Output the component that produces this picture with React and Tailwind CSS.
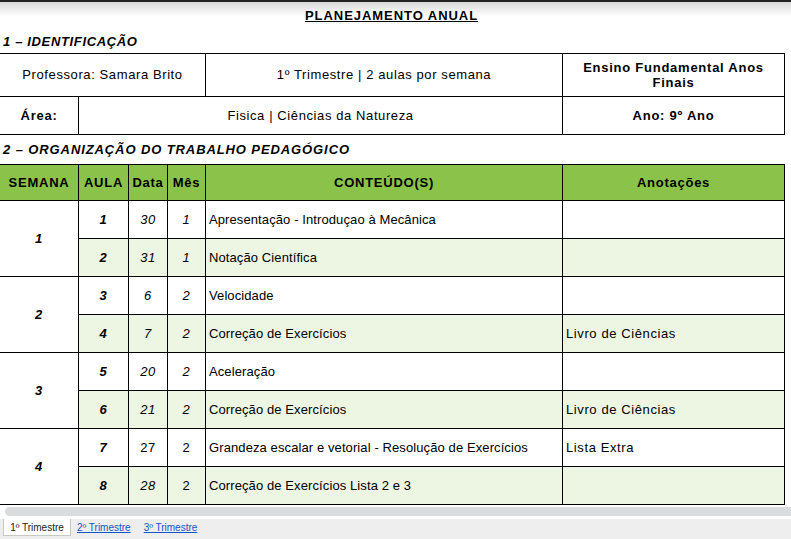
import React from "react";

const aulas = [
  { semana: 1, aula: 1, data: "30", dataIt: true, mes: "1", mesIt: true, conteudo: "Apresentação - Introduçao à Mecânica", nota: "" },
  { aula: 2, data: "31", dataIt: true, mes: "1", mesIt: true, conteudo: "Notação Científica", nota: "" },
  { semana: 2, aula: 3, data: "6", dataIt: true, mes: "2", mesIt: true, conteudo: "Velocidade", nota: "" },
  { aula: 4, data: "7", dataIt: true, mes: "2", mesIt: true, conteudo: "Correção de Exercícios", nota: "Livro de Ciências" },
  { semana: 3, aula: 5, data: "20", dataIt: true, mes: "2", mesIt: true, conteudo: "Aceleração", nota: "" },
  { aula: 6, data: "21", dataIt: true, mes: "2", mesIt: true, conteudo: "Correção de Exercícios", nota: "Livro de Ciências" },
  { semana: 4, aula: 7, data: "27", dataIt: false, mes: "2", mesIt: false, conteudo: "Grandeza escalar e vetorial - Resolução de Exercícios", nota: "Lista Extra" },
  { aula: 8, data: "28", dataIt: true, mes: "2", mesIt: false, conteudo: "Correção de Exercícios Lista 2 e 3", nota: "" },
];

const cell = "border-r border-b border-black flex items-center";

const App = () => {
  return (
    <div
      className="relative w-[791px] h-[539px] overflow-hidden bg-white text-[13px] tracking-[0.6px] text-black"
      style={{ fontFamily: '"Liberation Sans", Arial, sans-serif' }}
    >
      <div className="h-[2px] bg-[#232323]" />
      <div className="pointer-events-none absolute left-0 right-0 top-[2px] h-[14px] bg-linear-to-b from-[#d8d8d8] to-white/0" />

      <div className="h-[28px] flex items-center justify-center pr-[8px]">
        <span className="relative font-bold underline tracking-[0.95px]">PLANEJAMENTO ANUAL</span>
      </div>
      <div className="h-[23px] flex items-center pl-[3px] font-bold italic tracking-[0.65px]">
        1 – IDENTIFICAÇÃO
      </div>

      <div className="w-[785px] border-t border-black">
        <div className="flex h-[43px]">
          <div className={`${cell} w-[206px] justify-center`}>Professora: Samara Brito</div>
          <div className={`${cell} w-[357px] justify-center`}>1º Trimestre | 2 aulas por semana</div>
          <div className={`${cell} w-[222px] justify-center text-center font-bold tracking-[0.75px] leading-[15px] px-3`}>
            Ensino Fundamental Anos Finais
          </div>
        </div>
        <div className="flex h-[38px]">
          <div className={`${cell} w-[79px] justify-center font-bold tracking-[0.75px]`}>Área:</div>
          <div className={`${cell} w-[484px] justify-center`}>Fisica | Ciências da Natureza</div>
          <div className={`${cell} w-[222px] justify-center font-bold tracking-[0.75px]`}>Ano: 9º Ano</div>
        </div>
      </div>

      <div className="h-[29px] flex items-center pl-[3px] font-bold italic tracking-[0.9px]">
        2 – ORGANIZAÇÃO DO TRABALHO PEDAGÓGICO
      </div>

      <div className="grid w-[785px] grid-cols-[79px_50px_39px_38px_357px_222px] grid-rows-[36px_repeat(8,38px)] border-t border-black">
        {["SEMANA", "AULA", "Data", "Mês", "CONTEÚDO(S)", "Anotações"].map((h) => (
          <div key={h} className={`${cell} justify-center bg-[#8bc34a] font-bold tracking-[0.75px]`}>
            {h}
          </div>
        ))}
        {aulas.map((a, i) => {
          const bg = i % 2 === 1 ? "bg-[#edf5e3]" : "bg-white";
          return (
            <React.Fragment key={a.aula}>
              {a.semana && (
                <div className={`${cell} row-span-2 justify-center font-bold italic`}>{a.semana}</div>
              )}
              <div className={`${cell} ${bg} justify-center font-bold italic`}>{a.aula}</div>
              <div className={`${cell} ${bg} justify-center ${a.dataIt ? "italic" : ""}`}>{a.data}</div>
              <div className={`${cell} ${bg} justify-center ${a.mesIt ? "italic" : ""}`}>{a.mes}</div>
              <div className={`${cell} ${bg} pl-[3px] tracking-[0.1px]`}>{a.conteudo}</div>
              <div className={`${cell} ${bg} pl-[3px]`}>{a.nota}</div>
            </React.Fragment>
          );
        })}
      </div>

      <div className="h-[14px] pt-[2px] pl-[5px]">
        <div className="h-[9px] w-full rounded-l-full bg-[#dadce0]" />
      </div>

      <div className="flex h-[20px] items-start bg-[#eeeeee] pl-[3px] text-[10px] tracking-normal">
        <div className="flex h-[17px] w-[68px] items-center justify-center border border-t-0 border-[#c8c8c8] bg-white text-[#222]">
          1º Trimestre
        </div>
        <a href="#" className="ml-[6px] flex h-[17px] items-center text-[#1155cc] underline">
          2º Trimestre
        </a>
        <a href="#" className="ml-[13px] flex h-[17px] items-center text-[#1155cc] underline">
          3º Trimestre
        </a>
      </div>
    </div>
  );
};

export default App;
